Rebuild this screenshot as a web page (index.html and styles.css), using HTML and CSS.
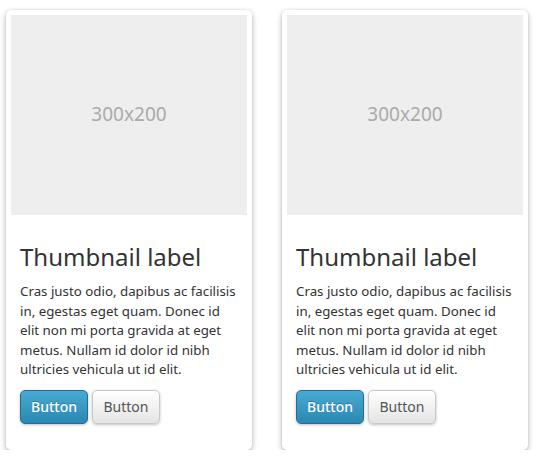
FILE: index.html
```html
<!DOCTYPE html>
<html>
<head>
<meta charset="utf-8">
<link rel="stylesheet" href="styles.css">
</head>
<body>
<div class="row">
  <div class="thumbnail">
    <div class="placeholder">300x200</div>
    <div class="caption">
      <h3>Thumbnail label</h3>
      <p>Cras justo odio, dapibus ac facilisis in, egestas eget quam. Donec id elit non mi porta gravida at eget metus. Nullam id dolor id nibh ultricies vehicula ut id elit.</p>
      <p class="actions"><a class="btn btn-primary">Button</a><a class="btn btn-default">Button</a></p>
    </div>
  </div>
  <div class="thumbnail">
    <div class="placeholder">300x200</div>
    <div class="caption">
      <h3>Thumbnail label</h3>
      <p>Cras justo odio, dapibus ac facilisis in, egestas eget quam. Donec id elit non mi porta gravida at eget metus. Nullam id dolor id nibh ultricies vehicula ut id elit.</p>
      <p class="actions"><a class="btn btn-primary">Button</a><a class="btn btn-default">Button</a></p>
    </div>
  </div>
</div>
</body>
</html>
```

FILE: styles.css
```css
html, body {
  margin: 0;
  padding: 0;
  background: #fff;
}
body {
  font-family: "Noto Sans", "Open Sans", sans-serif;
  color: #333;
  font-size: 13.3px;
  line-height: 19.5px;
}
.row {
  display: flex;
  gap: 30px;
  padding: 10px 0 0 6px;
  align-items: flex-start;
}
.thumbnail {
  width: 236px;
  padding: 5px;
  background: #fff;
  border-radius: 5px;
  box-shadow: 0 0 3px rgba(0,0,0,0.12), 0 3px 6px rgba(0,0,0,0.25);
}
.placeholder {
  height: 200px;
  background: #eee;
  color: #aaa;
  font-size: 19px;
  display: flex;
  align-items: center;
  justify-content: center;
}
.caption {
  padding: 9px;
}
.caption h3 {
  margin: 20px 0 12px;
  font-size: 24px;
  font-weight: normal;
  line-height: 26px;
  color: #333;
}
.caption p {
  margin: 0 0 10px;
}
.caption p.actions {
  margin: 0 0 12px;
  display: flex;
  gap: 4px;
}
.btn {
  display: inline-flex;
  align-items: center;
  justify-content: center;
  box-sizing: border-box;
  width: 68px;
  height: 34px;
  border-radius: 5px;
  font-size: 14px;
  box-shadow: 0 1px 3px rgba(0,0,0,0.25);
}
.btn-primary {
  color: #fff;
  font-weight: 500;
  background: linear-gradient(#48aad3, #2a88b1);
  border: 1px solid #236f92;
  text-shadow: 0 -1px 0 rgba(0,0,0,0.25);
}
.btn-default {
  color: #555;
  background: linear-gradient(#fff, #e4e4e4);
  border: 1px solid #c8c8c8;
}
```
